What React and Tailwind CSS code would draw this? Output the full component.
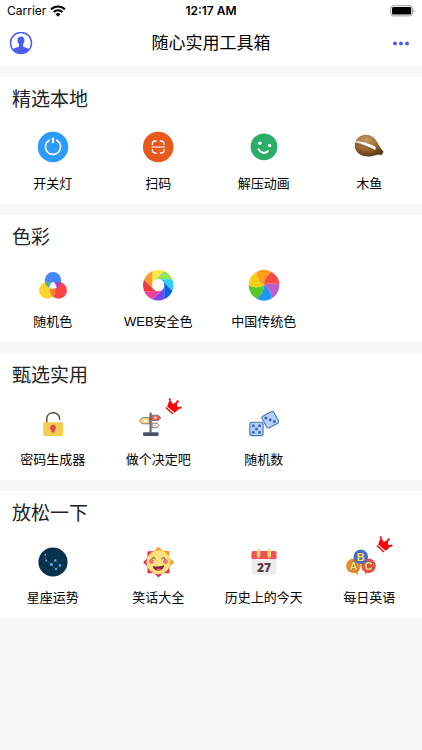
import clsx from "clsx";

/* ---------- Section icons, all on a 30 x 30 grid ---------- */

function PowerIcon() {
  return (
    <svg viewBox="0 0 30 30" className="size-[30px] overflow-visible">
      <circle cx="15" cy="15" r="15.3" fill="#2b9cfc" />
      <path
        d="M11.2 8.2a7.6 7.6 0 1 0 7.6 0"
        fill="none"
        stroke="#fff"
        strokeWidth="1.6"
        strokeLinecap="round"
      />
      <path d="M15 5.8v5.4" stroke="#fff" strokeWidth="2.2" />
    </svg>
  );
}

function ScanIcon() {
  return (
    <svg viewBox="0 0 30 30" className="size-[30px] overflow-visible">
      <circle cx="15.2" cy="15" r="15.3" fill="#e8591c" />
      <g fill="none" stroke="#fff" strokeWidth="1.3">
        <path d="M9.4 13v-1.4a2.6 2.6 0 0 1 2.6-2.6h1.6" />
        <path d="M16.8 9h1.6a2.6 2.6 0 0 1 2.6 2.6v1.4" />
        <path d="M9.4 17v1.4a2.6 2.6 0 0 0 2.6 2.6h1.6" />
        <path d="M16.8 21h1.6a2.6 2.6 0 0 0 2.6-2.6v-1.4" />
        <path d="M8.6 15h13.2" strokeWidth="1.1" />
      </g>
    </svg>
  );
}

function SmileIcon() {
  return (
    <svg viewBox="0 0 30 30" className="size-[30px]">
      <circle cx="15" cy="14.8" r="13.4" fill="#2aae67" />
      <circle cx="10.9" cy="11.2" r="1.7" fill="#fff" />
      <circle cx="20.6" cy="13.4" r="1.7" fill="#fff" />
      <path
        d="M9.6 17.4c1.6 3.6 6.4 4.6 9.2 1.9"
        fill="none"
        stroke="#fff"
        strokeWidth="2"
        strokeLinecap="round"
      />
    </svg>
  );
}

function WoodFishIcon() {
  return (
    <svg viewBox="0 0 30 30" className="size-[30px]">
      <defs>
        <radialGradient id="wood" cx="0.4" cy="0.25" r="0.75">
          <stop offset="0" stopColor="#c99a62" />
          <stop offset="0.55" stopColor="#9c6a37" />
          <stop offset="1" stopColor="#5b3717" />
        </radialGradient>
      </defs>
      <path
        d="M.8 13C1.2 6.6 6.4 2.6 12.2 2.7c6 .1 9.6 4.3 12 9 1.6 3.3 3.3 5.800 5 7.6.5 1-.2 2.200-.9 2.200l-.7 1.800-2.500-.9c-3.600.2-5.800 1.900-9.800 2.100C7.400 24.800.4 20.500.8 13Z"
        fill="url(#wood)"
      />
      <path
        d="M1.400 8.900c5.600.2 13.100 2.100 19.100 5.400 2 1.200 1.800 3.600-.2 3.300-5-2.800-12.300-5.800-18.900-7.600Z"
        fill="#fff"
      />
      <path
        d="M1.200 12c6.800 1.300 12.800 3.400 18.400 6.200"
        fill="none"
        stroke="#6b4520"
        strokeWidth="0.6"
      />
    </svg>
  );
}

function RgbIcon() {
  return (
    <svg viewBox="0 0 30 30" className="size-[30px]">
      <defs>
        <clipPath id="rgb-top">
          <circle cx="15" cy="10.4" r="8.3" />
        </clipPath>
        <clipPath id="rgb-left">
          <circle cx="9.4" cy="20.4" r="8.3" />
        </clipPath>
      </defs>
      <circle cx="15" cy="10.4" r="8.3" fill="#4688f8" />
      <circle cx="9.4" cy="20.4" r="8.3" fill="#fbd52e" />
      <circle cx="20.6" cy="20.4" r="8.3" fill="#fb4549" />
      <g clipPath="url(#rgb-top)">
        <circle cx="9.4" cy="20.4" r="8.3" fill="#48b5a0" />
        <circle cx="20.6" cy="20.4" r="8.3" fill="#a344c4" />
      </g>
      <g clipPath="url(#rgb-left)">
        <circle cx="20.6" cy="20.4" r="8.3" fill="#f9802c" />
      </g>
      <path
        d="M15 11.800c2.200 1.400 3.500 3.400 3.600 6-2.200 1.300-5 1.300-7.200 0 .1-2.600 1.400-4.600 3.600-6Z"
        fill="#fff"
      />
    </svg>
  );
}

const bladeColors = [
  "#fbe94a",
  "#93e552",
  "#2fd0f3",
  "#0c5fe8",
  "#7c45f2",
  "#ee3f9c",
  "#ef3a3c",
  "#f8a02e",
];

// Each blade lies between two neighbouring tangents of the centre hole
function bladePoints(index) {
  const ray = (i) => {
    const angle = Math.PI + (i * Math.PI) / 4;
    const normal = [Math.cos(angle), Math.sin(angle)];
    const tangent = [-normal[1], normal[0]];
    return [0, 30].map((s) => [
      15.2 + normal[0] * 6 + tangent[0] * s,
      15.2 + normal[1] * 6 + tangent[1] * s,
    ]);
  };
  const [a, b] = ray(index);
  const [c, d] = ray(index + 1);
  return [a, b, d, c].map((p) => p.join(",")).join(" ");
}

function ApertureIcon() {
  return (
    <svg viewBox="0 0 30 30" className="size-[30px] overflow-visible">
      <defs>
        <clipPath id="aperture">
          <circle cx="15.2" cy="15.2" r="15.2" />
        </clipPath>
      </defs>
      <g clipPath="url(#aperture)">
        {bladeColors.map((color, i) => (
          <polygon key={color} points={bladePoints(i)} fill={color} />
        ))}
      </g>
      <circle cx="15.2" cy="15.2" r="6.1" fill="#fff" />
    </svg>
  );
}

const wheelColors = ["#ba5fce", "#1f97f7", "#55c92b", "#fdcc14", "#ff9d18", "#fc4b46"];

function PinwheelIcon() {
  return (
    <svg viewBox="0 0 30 30" className="size-[30px] overflow-visible">
      {wheelColors.map((color, i) => (
        <path
          key={color}
          d="M0 0Q7.5-4 15.3 0A15.3 15.3 0 0 1 7.65 13.25Q7.21 4.5 0 0Z"
          transform={`translate(15 15.2) rotate(${i * 60})`}
          fill={color}
        />
      ))}
    </svg>
  );
}

function LockIcon() {
  return (
    <svg viewBox="0 0 30 30" className="size-[30px]">
      <path
        d="M8.800 15V10.500C8.800 2.800 21.600 2.800 21.600 10.500V11.300"
        fill="none"
        stroke="#4b3a2a"
        strokeWidth="1.3"
        strokeLinecap="round"
      />
      <rect x="5.200" y="14.200" width="19.800" height="13.800" rx="1.800" fill="#f3cd4f" />
      <path
        d="M15 16.800a2.900 2.900 0 0 1 1.800 5.200l-.5 2.600h-2.600l-.5-2.600a2.900 2.900 0 0 1 1.800-5.200Z"
        fill="#e0474c"
      />
    </svg>
  );
}

function SignpostIcon() {
  return (
    <svg viewBox="0 0 30 30" className="size-[30px]">
      <rect x="8" y="24.200" width="15.600" height="3.800" rx="1.200" fill="#46506c" />
      <g stroke="#7a6f78" strokeWidth="0.9">
        <path d="M16.500 7.200h6.800l2.500 2.600-2.500 2.700h-6.800Z" fill="#ec5a52" />
        <path d="M14.800 9.600H8.200c-4.400.6-4.400 5.600 0 6.200h6.600Z" fill="#f5d774" />
        <path d="M17 15.200h5.300l1.900 2.200-1.900 2.200H17Z" fill="#f7ece0" />
      </g>
      <rect x="14.500" y="4.400" width="2.200" height="20.600" rx="0.600" fill="#636b84" />
      <circle cx="20.300" cy="9.800" r="1.400" fill="#ffe4e0" />
      <circle cx="10.300" cy="12.700" r="1.500" fill="#fffbe6" />
      <circle cx="20" cy="17.400" r="0.700" fill="#c98d63" />
    </svg>
  );
}

function DiceIcon() {
  return (
    <svg viewBox="0 0 30 30" className="size-[30px]">
      <g fill="#b4d0f8" stroke="#4478bd" strokeWidth="1.1">
        <rect x="0.8" y="14.3" width="13.3" height="13.3" rx="2.2" />
        <rect
          x="14.6"
          y="5.1"
          width="13.3"
          height="13.3"
          rx="2.2"
          transform="rotate(-28 21.2 11.7)"
        />
      </g>
      <g fill="#3769b5">
        <circle cx="4.3" cy="17.7" r="1.5" />
        <circle cx="10.5" cy="17.7" r="1.5" />
        <circle cx="7.4" cy="21" r="1.5" />
        <circle cx="4.3" cy="24.3" r="1.5" />
        <circle cx="10.5" cy="24.3" r="1.5" />
        <circle cx="16.900" cy="10.1" r="1.5" />
        <circle cx="21.2" cy="11.8" r="1.5" />
        <circle cx="25.4" cy="13.5" r="1.5" />
      </g>
    </svg>
  );
}

function StarsIcon() {
  return (
    <svg viewBox="0 0 30 30" className="size-[30px] overflow-visible">
      <circle cx="15" cy="16" r="14.6" fill="#08314c" />
      <path
        d="M7.3 8.7l1 5.7 5 4 4-4 4.7 5-4 3.6-4.7-4.6"
        fill="none"
        stroke="#2a6c9b"
        strokeWidth="0.6"
      />
      <g fill="#4fa9e6">
        <circle cx="7.3" cy="8.7" r="0.9" />
        <circle cx="8.3" cy="14.4" r="1" />
        <circle cx="13.3" cy="18.4" r="1.5" />
        <circle cx="17.3" cy="14.4" r="1.2" />
        <circle cx="22" cy="19.4" r="1.3" />
        <circle cx="18" cy="23" r="1.2" />
      </g>
      <g fill="#2d6486">
        <circle cx="14" cy="7" r="0.5" />
        <circle cx="21" cy="9" r="0.5" />
        <circle cx="6" cy="21" r="0.5" />
        <circle cx="11" cy="25" r="0.5" />
        <circle cx="25" cy="14" r="0.5" />
      </g>
    </svg>
  );
}

function SunIcon() {
  return (
    <svg viewBox="0 0 30 30" className="size-[30px] overflow-visible">
      <g transform="translate(15.5 16.3)">
        <g fill="#f7941e">
          <path d="M-4.500-11 0-15.500 4.500-11Z" />
          <path d="M3-11.300h7.900V-3Z" />
          <path d="M11-4.500 15.500 0 11 4.500Z" />
        </g>
        <g fill="#e92b52">
          <path d="M11 3v8H3Z" />
          <path d="M-4.500 11 0 15.300 4.500 11Z" />
          <path d="M-11 3v8h8Z" />
          <path d="M-11-4.500-15.300 0-11 4.500Z" />
          <path d="M-11-3v-8h8Z" />
        </g>
        <circle r="12" fill="#fee07c" />
        <circle cx="-7" cy="-.8" r="2.4" fill="#f2707a" />
        <circle cx="7" cy="-.8" r="2.4" fill="#f2707a" />
        <path
          d="M-6.600-3.400c.6-1.800 2.600-1.800 3.200 0M3.400-3.400c.6-1.800 2.600-1.800 3.200 0"
          fill="none"
          stroke="#6e5a55"
          strokeWidth="1.1"
          strokeLinecap="round"
        />
        <path d="M-5.800 3.600C-2 4.600 2 4.300 5.600 2.600 5.600 9.600-4.600 10.400-5.800 3.600Z" fill="#7c1f43" />
        <path d="M-2.800 7.300c1.600-1.500 4-1.600 5.800-.4-1.600 1.600-4 1.600-5.800.4Z" fill="#f0596e" />
      </g>
    </svg>
  );
}

function CalendarIcon() {
  return (
    <svg viewBox="0 0 30 30" className="size-[30px]">
      <rect x="2.500" y="5" width="25" height="24.500" rx="2" fill="#eeecef" />
      <path d="M4.500 5h21a2 2 0 0 1 2 2v6h-25V7a2 2 0 0 1 2-2Z" fill="#f1525a" />
      <rect x="7.800" y="3" width="3.400" height="8.800" rx="1.700" fill="#fbd96c" />
      <rect x="18.600" y="3" width="3.400" height="8.800" rx="1.700" fill="#fbd96c" />
      <text
        x="15"
        y="25.500"
        textAnchor="middle"
        className="font-['Open_Sans',sans-serif] text-[12px] font-extrabold"
        fill="#5b4247"
      >
        27
      </text>
    </svg>
  );
}

function BalloonsIcon() {
  const balloons = [
    { letter: "A", x: 7.4, y: 19.8, color: "#f08a24" },
    { letter: "C", x: 22.6, y: 19.8, color: "#e94f4a" },
    { letter: "B", x: 14.8, y: 10.8, color: "#3f72d8" },
  ];
  return (
    <svg viewBox="0 0 30 30" className="size-[30px] overflow-visible">
      <path d="M8.400 26l3.200 3 .6-4Z" fill="#f08a24" />
      <path d="M21 26l-1 3-1.400-4.200Z" fill="#e94f4a" />
      {balloons.map(({ letter, x, y, color }) => (
        <g key={letter}>
          <circle cx={x} cy={y} r="7.3" fill={color} />
          <text
            x={x}
            y={y + 4}
            textAnchor="middle"
            className="font-['Liberation_Sans',sans-serif] text-[11px] font-bold [paint-order:stroke]"
            fill="#fde07a"
            stroke="#6b5a4a"
            strokeWidth="1"
          >
            {letter}
          </text>
        </g>
      ))}
    </svg>
  );
}

function CrownIcon() {
  return (
    <svg viewBox="0 0 17 17" className="-mt-2.5 size-[17px] overflow-visible">
      <path
        d="M2.200 8.500 4.700 1.600l3.200 4.300 4.500-2.500-.5 5.100 3.800 1-6 5.200Z"
        fill="#fb0007"
      />
      <path d="M.8 9.500 8 16" stroke="#fb0007" strokeWidth="1.4" />
      <g fill="#fb0007">
        <circle cx="4.800" cy="1.300" r="1.100" />
        <circle cx="12.600" cy="3.400" r="1.200" />
        <circle cx="15.500" cy="9.700" r="1.100" />
      </g>
    </svg>
  );
}

/* ---------- Data ---------- */

const sections = [
  {
    title: "精选本地",
    tools: [
      { name: "开关灯", Icon: PowerIcon },
      { name: "扫码", Icon: ScanIcon },
      { name: "解压动画", Icon: SmileIcon },
      { name: "木鱼", Icon: WoodFishIcon },
    ],
  },
  {
    title: "色彩",
    tools: [
      { name: "随机色", Icon: RgbIcon },
      { name: "WEB安全色", Icon: ApertureIcon },
      { name: "中国传统色", Icon: PinwheelIcon },
    ],
  },
  {
    title: "甄选实用",
    tools: [
      { name: "密码生成器", Icon: LockIcon },
      { name: "做个决定吧", Icon: SignpostIcon, vip: true },
      { name: "随机数", Icon: DiceIcon },
    ],
  },
  {
    title: "放松一下",
    tools: [
      { name: "星座运势", Icon: StarsIcon },
      { name: "笑话大全", Icon: SunIcon },
      { name: "历史上的今天", Icon: CalendarIcon },
      { name: "每日英语", Icon: BalloonsIcon, vip: true },
    ],
  },
];

/* ---------- Layout ---------- */

function StatusBar() {
  return (
    <div className="grid h-[22px] grid-cols-3 items-center px-[7px] font-['Inter',sans-serif] text-[12px] leading-none">
      <div className="flex items-center gap-1">
        <span>Carrier</span>
        <svg viewBox="0 0 16 12" className="h-3 w-4">
          <g fill="none" stroke="#000" strokeWidth="2">
            <path d="M1 4.400a10 10 0 0 1 14 0" />
            <path d="M3.600 7.100a6.300 6.300 0 0 1 8.800 0" />
          </g>
          <path d="M5.600 9.200a3.500 3.500 0 0 1 4.800 0L8 11.700Z" />
        </svg>
      </div>
      <span className="text-center font-semibold">12:17 AM</span>
      <svg viewBox="0 0 25 12" className="h-3 w-[25px] justify-self-end">
        <rect x="0.700" y="0.700" width="21.800" height="10.200" rx="2.800" fill="none" stroke="#9b9b9b" />
        <rect x="2" y="2" width="19.200" height="7.600" rx="1.400" />
        <path d="M23.500 4v3.600c1.400-.6 1.400-3 0-3.600Z" fill="#9b9b9b" />
      </svg>
    </div>
  );
}

function NavBar() {
  return (
    <div className="flex h-11 items-center justify-between px-[9px]">
      <button type="button" aria-label="个人中心">
        <svg viewBox="0 0 24 24" className="size-6">
          <circle cx="12" cy="11" r="10.500" fill="none" stroke="#4a5cf2" strokeWidth="1.5" />
          <path
            d="M12 4.400c2.600 0 3.600 1.900 3.400 4.300-.1 1.600-.7 2.700-1.300 3.500v2c.5 1.200 4.200 1.400 6 3.200a10.200 10.200 0 0 1-16.200 0c1.800-1.800 5.500-2 6-3.200v-2c-.6-.8-1.200-1.900-1.300-3.500C8.400 6.300 9.400 4.400 12 4.400Z"
            fill="#4a5cf2"
          />
        </svg>
      </button>
      <h1 className="text-[17px]">随心实用工具箱</h1>
      <button type="button" aria-label="更多">
        <svg viewBox="0 0 24 24" className="size-6" fill="#4a5cf2">
          <circle cx="6" cy="11.500" r="1.900" />
          <circle cx="12" cy="11.500" r="1.900" />
          <circle cx="18" cy="11.500" r="1.900" />
        </svg>
      </button>
    </div>
  );
}

function Tool({ name, Icon, vip }) {
  return (
    <button type="button" className="flex flex-col items-center gap-3">
      <span className={clsx("flex h-[30px]", vip && "items-start")}>
        <Icon />
        {vip && <CrownIcon />}
      </span>
      <span className="text-[13px] leading-5 whitespace-nowrap">{name}</span>
    </button>
  );
}

export default function App() {
  return (
    <div className="min-h-screen bg-[#f7f7f7] font-['Liberation_Sans','Noto_Sans_CJK_SC',sans-serif] text-black">
      <header className="bg-white">
        <StatusBar />
        <NavBar />
      </header>

      <main className="flex flex-col gap-[11px] pt-[11px]">
        {sections.map(({ title, tools }) => (
          <section key={title} className="bg-white pt-[9px] pb-2.5">
            <h2 className="px-3 text-[19px] leading-7 text-[#222]">{title}</h2>
            <div className="mt-[18px] grid grid-cols-4">
              {tools.map((tool) => (
                <Tool key={tool.name} {...tool} />
              ))}
            </div>
          </section>
        ))}
      </main>
    </div>
  );
}
